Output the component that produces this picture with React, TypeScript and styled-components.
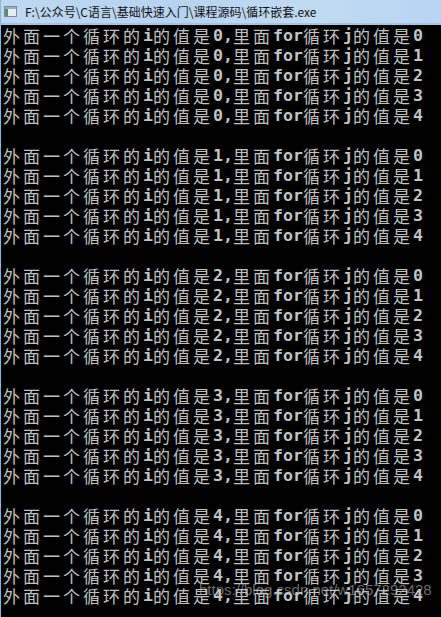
import React from "react";
import styled, { createGlobalStyle } from "styled-components";

const Global = createGlobalStyle`
  html, body { margin: 0; padding: 0; background: #000; }
  body { width: 441px; height: 617px; overflow: hidden; }
`;

const Window = styled.div`
  position: relative;
  width: 441px;
  height: 617px;
  background: #000;
  border-left: 1px solid #8fb4dc;
  box-sizing: border-box;
  overflow: hidden;
`;

const TitleBar = styled.div`
  height: 23px;
  display: flex;
  align-items: center;
  gap: 8px;
  padding-left: 3px;
  background: linear-gradient(90deg, #bfd8f2 0%, #b6d3f1 40%, #c2dbf3 70%, #b7d4f1 100%);
  border-bottom: 2px solid #a9c3de;
`;

const TitleText = styled.span`
  font-family: "Noto Sans CJK SC", "Liberation Sans", sans-serif;
  font-size: 12px;
  color: #111;
  line-height: 14px;
  margin-top: 1px;
`;

const Console = styled.div`
  padding: 1px 0 0 2px;
  display: flex;
  flex-direction: column;
`;

const Group = styled.div`
  display: flex;
  flex-direction: column;
  margin-bottom: 20px;
`;

const Line = styled.div`
  height: 20px;
  line-height: 20px;
  white-space: pre;
  color: #c0c0c0;
  display: flex;
  align-items: center;
`;

const Cjk = styled.span`
  font-family: "Noto Sans CJK SC", sans-serif;
  font-size: 17px;
  letter-spacing: 3px;
  font-weight: 400;
  color: #c0c0c0;
  line-height: 20px;
`;

const Ascii = styled.span`
  font-family: "DejaVu Sans Mono", monospace;
  font-weight: bold;
  font-size: 16.6px;
  line-height: 20px;
  color: #c4c4c4;
`;

const Watermark = styled.div`
  position: absolute;
  left: 198px;
  top: 581px;
  width: 236px;
  font-family: "Liberation Sans", "DejaVu Sans", sans-serif;
  font-size: 15px;
  line-height: 18px;
  color: rgba(200, 200, 200, 0.55);
  white-space: nowrap;
  pointer-events: none;
`;

const ConsoleIcon = () => (
  <svg width="13" height="11" viewBox="0 0 13 11">
    <rect x="0.5" y="0.5" width="12" height="10" fill="#f4f6f8" stroke="#7d8a96" />
    <rect x="1" y="1" width="11" height="2" fill="#8fb0cf" />
    <rect x="1" y="3" width="3" height="7" fill="#5e8a6e" />
    <rect x="4" y="3" width="8" height="7" fill="#e9edf1" />
  </svg>
);

const renderText = (s: string) => {
  const parts = s.split(/([\x00-\x7f]+)/).filter((p) => p.length > 0);
  return parts.map((p, i) =>
    /^[\x00-\x7f]+$/.test(p) ? <Ascii key={i}>{p}</Ascii> : <Cjk key={i}>{p}</Cjk>
  );
};

export default function App() {
  const groups = [0, 1, 2, 3, 4];
  return (
    <>
      <Global />
      <Window>
        <TitleBar>
          <ConsoleIcon />
          <TitleText>F:\公众号\C语言\基础快速入门\课程源码\循环嵌套.exe</TitleText>
        </TitleBar>
        <Console>
          {groups.map((i) => (
            <Group key={i}>
              {[0, 1, 2, 3, 4].map((j) => (
                <Line key={j}>{renderText(`外面一个循环的i的值是${i},里面for循环j的值是${j}`)}</Line>
              ))}
            </Group>
          ))}
        </Console>
        <Watermark>https://blog.csdn.net/w1657292428</Watermark>
      </Window>
    </>
  );
}
